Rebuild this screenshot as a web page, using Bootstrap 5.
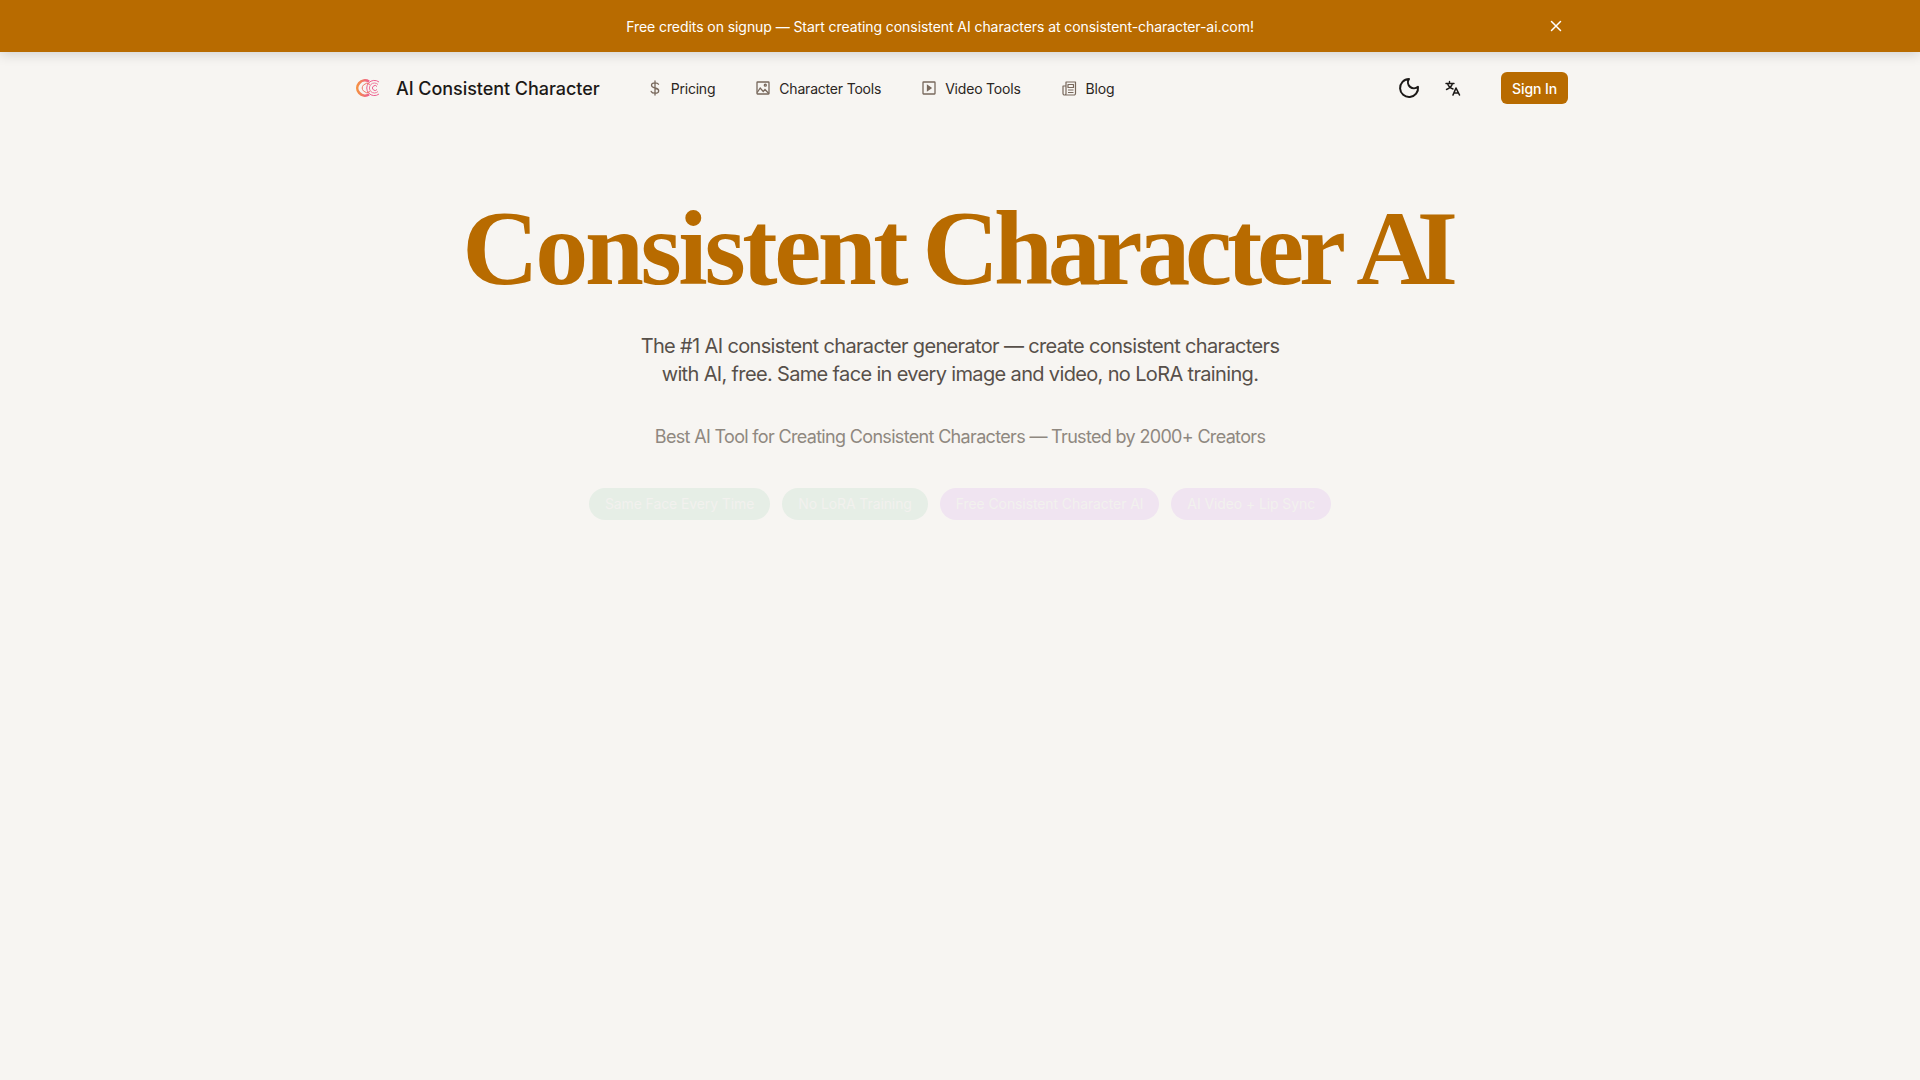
<!DOCTYPE html>
<html lang="en">
<head>
  <meta charset="UTF-8">
  <title>Consistent Character AI</title>
  <meta name="viewport" content="width=device-width, initial-scale=1">
  <link href="https://cdn.jsdelivr.net/npm/bootstrap@5.3.3/dist/css/bootstrap.min.css" rel="stylesheet">
  <style>
    body { background-color: #f7f5f2; font-family: Inter, "Noto Sans", sans-serif; color: #1c1917; min-height: 1080px; }
    .promo-bar { background-color: #b86b00; color: #fff; height: 52px; font-size: 14px; letter-spacing: -.07px; padding-right: 40px; box-shadow: 0 2px 12px rgba(0,0,0,.16); position: relative; }
    .promo-close { right: 356px; top: 50%; transform: translateY(-50%); width: 16px; height: 16px; background: none; border: 0; padding: 0; color: #fff; line-height: 0; }
    .top-nav { width: 1216px; height: 72px; padding: 0 0 0 4px; }
    .brand-name { font-size: 18px; font-weight: 500; color: #1c1917; margin-left: 16px; margin-right: 48px; letter-spacing: -.05px; text-decoration: none; }
    .nav-item-link { font-size: 14px; color: #2b2622; text-decoration: none; margin-right: 41px; letter-spacing: -.2px; }
    .nav-item-link svg { margin-right: 9px; color: #78685c; }
    .btn-signin { background-color: #b86b00; color: #fff; font-size: 14px; font-weight: 500; letter-spacing: -.1px; border: 0; border-radius: 6px; height: 32px; width: 67px; padding: 0; margin-left: 40px; }
    .btn-signin:hover { background-color: #a05d00; color: #fff; }
    .hero-title { font-family: "Liberation Serif", serif; font-weight: 700; font-size: 106px; line-height: 1; color: #b86b00; margin: 72px 0 0; padding-right: 5px; letter-spacing: -5.2px; word-spacing: -4px; }
    .title-word-a { letter-spacing: -3.4px; }
    .title-word-b { letter-spacing: -16px; }
    .hero-sub { font-size: 20px; line-height: 28px; color: #57504a; width: 672px; margin: 30px 0 0; letter-spacing: -.65px; }
    .hero-trust { font-size: 18px; line-height: 28px; color: #8f8880; margin: 35px 0 0; letter-spacing: -.67px; }
    .chip-row { margin-top: 37px; gap: 12px; }
    .chip-item { font-size: 14px; height: 32px; line-height: 32px; padding: 0 16px; border-radius: 16px; color: #f2f1ee; letter-spacing: -.1px; }
    .chip-green { background-color: #e6eee6; }
    .chip-pink { background-color: #f0e4f1; }
  </style>
</head>
<body>
  <div class="promo-bar d-flex align-items-center justify-content-center">
    <span>Free credits on signup — Start creating consistent AI characters at consistent-character-ai.com!</span>
    <button class="promo-close position-absolute" aria-label="Close">
      <svg width="16" height="16" viewBox="0 0 16 16" fill="none" stroke="currentColor" stroke-width="1.5" stroke-linecap="round"><path d="M3.5 3.5l9 9M12.5 3.5l-9 9"/></svg>
    </button>
  </div>

  <nav class="top-nav mx-auto d-flex align-items-center">
    <svg width="24" height="24" viewBox="0 0 24 24" fill="none" stroke-width="1">
      <defs><linearGradient id="logoGrad" x1="0" x2="1" y1="0" y2="0"><stop offset="0" stop-color="#f59043"/><stop offset="1" stop-color="#ee5f8f"/></linearGradient></defs>
      <path d="M13 5.6a7.6 7.6 0 1 0 0 12.8" stroke="url(#logoGrad)" stroke-width="2.6"/>
      <path d="M23 6a7.6 7.6 0 1 0 0 12" stroke="#ee5f8f"/>
      <path d="M22 8.5a5 5 0 1 0 0 7" stroke="#f07a9a"/>
      <path d="M14 8.5a4.6 4.6 0 1 0 0 7" stroke="#f07a6a"/>
      <path d="M21 10.5a2.5 2.5 0 1 0 0 3" stroke="#ee5f8f"/>
    </svg>
    <a class="brand-name" href="#">AI Consistent Character</a>
    <a class="nav-item-link d-flex align-items-center" href="#">
      <svg width="14" height="16" viewBox="0 0 14 16" fill="none" stroke="currentColor" stroke-width="1.3" stroke-linecap="round"><path d="M7 1v14M10.5 4.2C10 3.2 8.8 2.8 7 2.8c-2 0-3.5.9-3.5 2.5S5 7.5 7 8s3.7 1 3.7 2.7S9 13.2 7 13.2c-1.9 0-3.3-.6-3.8-1.8"/></svg>Pricing
    </a>
    <a class="nav-item-link d-flex align-items-center" href="#">
      <svg width="14" height="14" viewBox="0 0 14 14" fill="none" stroke="currentColor" stroke-width="1.3"><rect x="1" y="1" width="12" height="12" rx=".5"/><circle cx="9.3" cy="4.2" r="1"/><path d="M1.2 11.5l3-4.5 3 3.5 1.8-2 3.8 4"/></svg>Character Tools
    </a>
    <a class="nav-item-link d-flex align-items-center" href="#">
      <svg width="14" height="14" viewBox="0 0 14 14" fill="none" stroke="currentColor" stroke-width="1.3"><rect x="1" y="1" width="12" height="12" rx=".5"/><path d="M5.5 4.5l3.5 2.5-3.5 2.5z" fill="currentColor"/></svg>Video Tools
    </a>
    <a class="nav-item-link d-flex align-items-center" href="#">
      <svg width="15" height="15" viewBox="0 0 15 15" fill="none" stroke="currentColor" stroke-width="1.2" stroke-linejoin="round"><path d="M4 1h9.500v11.500a1.500 1.500 0 0 1-1.500 1.500H2.500A1.500 1.500 0 0 1 1 12.500V5h3zM4 5v7.500a1.500 1.500 0 0 1-1.500 1.500"/><path d="M6 3.500h5.500v3H6zM6 9h5.500M6 11.500h5.500"/></svg>Blog
    </a>
    <button class="btn p-0 border-0 ms-auto d-flex" aria-label="Theme">
      <svg width="24" height="24" viewBox="0 0 24 24" fill="none" stroke="#1c1917" stroke-width="2" stroke-linecap="round" stroke-linejoin="round"><path d="M12 3a6 6 0 0 0 9 7.800A9 9 0 1 1 12 3z"/></svg>
    </button>
    <button class="btn p-0 border-0 d-flex" style="margin-left:24px" aria-label="Language">
      <svg width="16" height="16" viewBox="0 0 16 16" fill="none" stroke="#1c1917" stroke-width="1.4" stroke-linecap="round" stroke-linejoin="round"><path d="M1 3.500h8M4.500 1.500v2M7.500 3.500C6.600 6.600 4.200 8.500 1.500 9.500M2.500 3.500c.8 2.500 3 4.600 5.500 5.500"/><path d="M8 15l3-7 3.500 7M9 13h4.500" stroke-width="1.6"/></svg>
    </button>
    <button class="btn btn-signin">Sign In</button>
  </nav>

  <main class="d-flex flex-column align-items-center text-center">
    <h1 class="hero-title"><span class="title-word-a">Consistent</span> Character <span class="title-word-b">A</span>I</h1>
    <p class="hero-sub">The #1 AI consistent character generator — create consistent characters with AI, free. Same face in every image and video, no LoRA training.</p>
    <p class="hero-trust">Best AI Tool for Creating Consistent Characters — Trusted by 2000+ Creators</p>
    <div class="chip-row d-flex">
      <span class="chip-item chip-green">Same Face Every Time</span>
      <span class="chip-item chip-green">No LoRA Training</span>
      <span class="chip-item chip-pink">Free Consistent Character AI</span>
      <span class="chip-item chip-pink">AI Video + Lip Sync</span>
    </div>
  </main>

  <script src="https://cdn.jsdelivr.net/npm/bootstrap@5.3.3/dist/js/bootstrap.bundle.min.js"></script>
</body>
</html>
